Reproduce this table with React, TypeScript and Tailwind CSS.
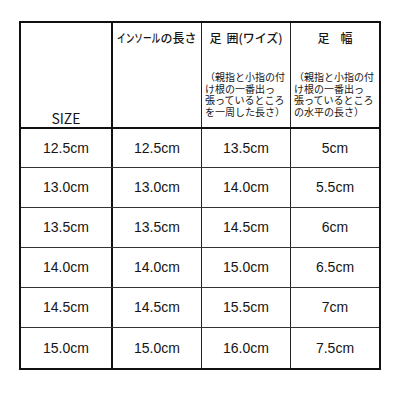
import React from "react";

const rows = [
  ["12.5cm", "12.5cm", "13.5cm", "5cm"],
  ["13.0cm", "13.0cm", "14.0cm", "5.5cm"],
  ["13.5cm", "13.5cm", "14.5cm", "6cm"],
  ["14.0cm", "14.0cm", "15.0cm", "6.5cm"],
  ["14.5cm", "14.5cm", "15.5cm", "7cm"],
  ["15.0cm", "15.0cm", "16.0cm", "7.5cm"],
];

const jp = { fontFamily: '"Noto Sans CJK JP", sans-serif' };
const num = { fontFamily: '"Liberation Sans", "Noto Sans CJK JP", sans-serif' };

export default function App() {
  return (
    <div className="w-[400px] h-[400px] bg-white pt-[21px] pl-[19px] text-[#151515]" style={jp}>
      <div className="w-[362px] border-2 border-[#111]">
        {/* header */}
        <div className="grid grid-cols-[92px_89px_89px_88px] h-[106px] border-b-2 border-[#111]">
          <div className="border-r-2 border-[#111] flex items-end justify-center pb-[1px]">
            <span className="text-[14px] leading-[16px]">SIZE</span>
          </div>
          <div className="border-r border-[#222] flex justify-center pt-[7px]">
            <span className="flex text-[12px] leading-[16px] font-medium whitespace-nowrap">
              <span className="inline-block w-[43px] origin-left scale-x-[0.72]">インソール</span>
              <span>の長さ</span>
            </span>
          </div>
          <div className="border-r border-[#222] flex flex-col pt-[7px]">
            <div className="flex justify-center text-[12px] leading-[16px] font-medium whitespace-nowrap">
              <span>足</span>
              <span className="ml-[5px]">囲(ワイズ)</span>
            </div>
            <div className="mt-[25px] pl-[3px] text-[10px] leading-[11.5px] whitespace-nowrap">
              （親指と小指の付
              <br />
              け根の一番出っ
              <br />
              張っているところ
              <br />
              を一周した長さ）
            </div>
          </div>
          <div className="flex flex-col pt-[7px]">
            <div className="flex justify-center text-[12px] leading-[16px] font-medium whitespace-nowrap">
              <span>足</span>
              <span className="ml-[11px]">幅</span>
            </div>
            <div className="mt-[25px] pl-[3px] text-[10px] leading-[11.5px] whitespace-nowrap">
              （親指と小指の付
              <br />
              け根の一番出っ
              <br />
              張っているところ
              <br />
              の水平の長さ）
            </div>
          </div>
        </div>
        {/* body */}
        {rows.map((r, i) => (
          <div
            key={i}
            style={num}
            className={
              "grid grid-cols-[92px_89px_89px_88px] text-[14px] " +
              (i === 0
                ? "h-[39px] border-b border-[#333]"
                : i === rows.length - 1
                ? "h-[40px]"
                : "h-[40px] border-b border-[#333]")
            }
          >
            <div className="border-r-2 border-[#111] flex items-center justify-center">{r[0]}</div>
            <div className="border-r border-[#222] flex items-center justify-center">{r[1]}</div>
            <div className="border-r border-[#222] flex items-center justify-center">{r[2]}</div>
            <div className="flex items-center justify-center">{r[3]}</div>
          </div>
        ))}
      </div>
    </div>
  );
}
